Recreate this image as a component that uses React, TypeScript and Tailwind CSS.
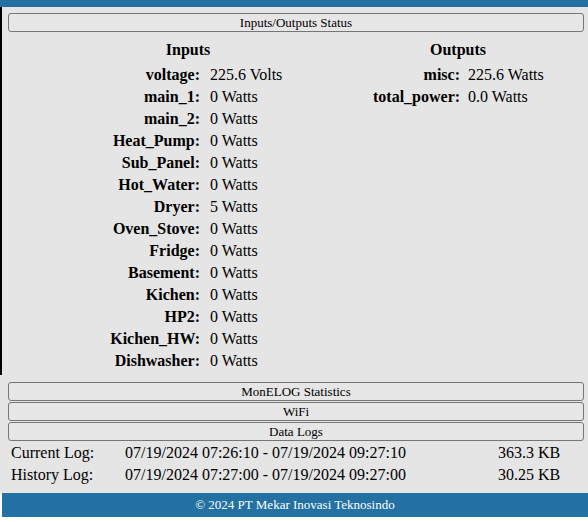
const inputs: [string, string][] = [
  ["voltage", "225.6 Volts"],
  ["main_1", "0 Watts"],
  ["main_2", "0 Watts"],
  ["Heat_Pump", "0 Watts"],
  ["Sub_Panel", "0 Watts"],
  ["Hot_Water", "0 Watts"],
  ["Dryer", "5 Watts"],
  ["Oven_Stove", "0 Watts"],
  ["Fridge", "0 Watts"],
  ["Basement", "0 Watts"],
  ["Kichen", "0 Watts"],
  ["HP2", "0 Watts"],
  ["Kichen_HW", "0 Watts"],
  ["Dishwasher", "0 Watts"],
];

const outputs: [string, string][] = [
  ["misc", "225.6 Watts"],
  ["total_power", "0.0 Watts"],
];

const logs = [
  { name: "Current Log:", range: "07/19/2024 07:26:10 - 07/19/2024 09:27:10", size: "363.3 KB" },
  { name: "History Log:", range: "07/19/2024 07:27:00 - 07/19/2024 09:27:00", size: "30.25 KB" },
];

function SectionButton({ label }: { label: string }) {
  return (
    <button className="block h-[19px] w-full rounded-[3px] border border-[#767676] bg-[#e6e6e6] font-['Liberation_Serif',serif] text-[13px] leading-[17px] text-black">
      {label}
    </button>
  );
}

export default function App() {
  return (
    <div className="w-[588px] h-[522px] bg-white font-['Liberation_Serif',serif] text-black">
      {/* Top bar */}
      <div className="h-[7px] bg-[#2370a2]" />

      {/* Inputs / Outputs */}
      <div className="border-l-2 border-black bg-[#e5e5e5] pl-[6px] pr-[4px] pt-[6px] pb-[3px]">
        <SectionButton label="Inputs/Outputs Status" />
        <div className="flex mt-[8px] text-[16px]">
          <div className="ml-[100px] w-[160px]">
            <div className="h-[20px] leading-[20px] mb-[4px] text-center font-bold">Inputs</div>
            <div className="grid grid-cols-[92px_auto] gap-x-[10px] whitespace-nowrap">
              {inputs.map(([k, v]) => (
                <div key={k} className="contents">
                  <div className="h-[22px] leading-[22px] text-right font-bold">{k}:</div>
                  <div className="h-[22px] leading-[22px]">{v}</div>
                </div>
              ))}
            </div>
          </div>
          <div className="ml-[105px] w-[170px]">
            <div className="h-[20px] leading-[20px] mb-[4px] text-center font-bold">Outputs</div>
            <div className="grid grid-cols-[87px_auto] gap-x-[8px] whitespace-nowrap">
              {outputs.map(([k, v]) => (
                <div key={k} className="contents">
                  <div className="h-[22px] leading-[22px] text-right font-bold">{k}:</div>
                  <div className="h-[22px] leading-[22px]">{v}</div>
                </div>
              ))}
            </div>
          </div>
        </div>
      </div>

      {/* Other sections + logs */}
      <div className="bg-[#e5e5e5] pl-[8px] pr-[4px] pt-[7px] pb-[7px]">
        <div className="flex flex-col gap-[1px]">
          <SectionButton label="MonELOG Statistics" />
          <SectionButton label="WiFi" />
          <SectionButton label="Data Logs" />
        </div>
        <div className="mt-[1px] text-[16px] whitespace-nowrap">
          {logs.map((l) => (
            <div key={l.name} className="flex h-[22px] leading-[22px]">
              <div className="w-[117px] pl-[3px]">{l.name}</div>
              <div className="w-[373px]">{l.range}</div>
              <div>{l.size}</div>
            </div>
          ))}
        </div>
      </div>

      {/* Footer */}
      <div className="pl-[2px]">
        <div className="h-[24px] bg-[#2370a2] text-center text-[13px] leading-[24px] text-white">
          © 2024 PT Mekar Inovasi Teknosindo
        </div>
      </div>
    </div>
  );
}
